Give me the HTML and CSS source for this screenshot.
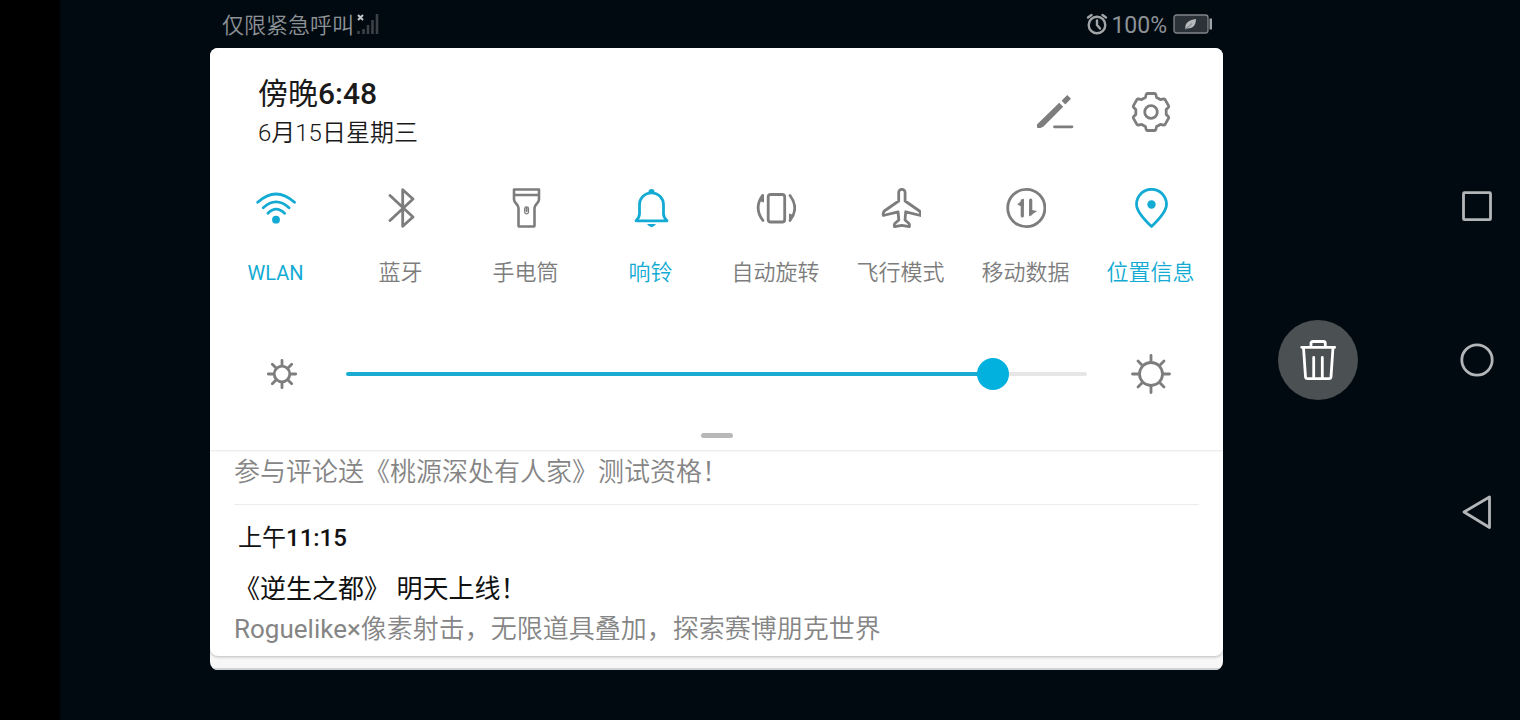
FILE: index.html
```html
<!DOCTYPE html>
<html lang="zh-CN">
<head>
<meta charset="utf-8">
<meta name="viewport" content="width=device-width, initial-scale=1">
<title>通知中心</title>
<link rel="stylesheet" href="styles.css">
</head>
<body>

<div class="cutout"></div>

<main class="shade">
  <header class="status">
    <span class="carrier">仅限紧急呼叫</span>
    <svg class="signal" width="24" height="24" viewBox="0 0 24 24">
      <path d="M2 3l5 5M7 3l-5 5" stroke="#c3c6c8" stroke-width="2"/>
      <path d="M2.500 22v-3M7.500 22v-5M12 22v-9M16.500 22V8M21 22V2" stroke="#3b4146" stroke-width="2.600"/>
    </svg>
    <svg class="alarm" width="22" height="24" viewBox="0 0 22 24" fill="none" stroke="#a2a5a7" stroke-width="2.400" stroke-linecap="round">
      <circle cx="11" cy="13" r="8.300"/>
      <path d="M11 8.500v4.500l3 3.500M2 5.500L5.500 3M20 5.500L16.500 3"/>
    </svg>
    <span class="percent">100%</span>
    <svg class="battery" width="40" height="20" viewBox="0 0 40 20">
      <rect x="1" y="1" width="34" height="18" rx="2.500" fill="#2c3338" stroke="#80858a" stroke-width="1.300"/>
      <path d="M36.500 4.500h2.500v11h-2.500z" fill="#a2a5a7"/>
      <path d="M12.500 15.500c-1-6 2.500-9.500 10.500-10.500 0 6-3 10-9 9.500l-1 1z" fill="#b5b9bb"/>
      <path d="M13 15l6-5.500" stroke="#555b60" stroke-width=".7"/>
    </svg>
  </header>

  <section class="panel">
    <div class="quick">
      <div class="top">
        <div class="clock">
          <h1>傍晚<span class="digits">6:48</span></h1>
          <p>6月15日星期三</p>
        </div>
        <button class="icon-btn" aria-label="编辑">
          <svg class="icon" viewBox="0 0 40 40">
            <path d="M24.200 10.800l4 4L8.500 34.500 5.500 36H3q-1 0-1-1v-2.500z" fill="currentColor" stroke="none"/>
            <path d="M30.300 8.700L32.300 6.700" stroke-width="5.200" stroke-linecap="square" stroke-linejoin="round"/>
            <path d="M19.500 34.800h17.500"/>
          </svg>
        </button>
        <button class="icon-btn" aria-label="设置">
          <svg class="icon" viewBox="0 0 40 40">
            <path d="M16.500 1.500h7q1 0 1.300 1l.8 3q2 1 3.800 2.200l3.200-.8q1 0 1.500.7l3.400 6q.5 1 0 1.600l-2.300 2.300v5l2.300 2.300q.5.600 0 1.600l-3.400 6q-.5.700-1.500.7l-3.200-.8q-1.800 1.200-3.800 2.200l-.8 3q-.3 1-1.300 1h-7q-1 0-1.300-1l-.8-3q-2-1-3.800-2.200l-3.200.8q-1 0-1.500-.7l-3.400-6q-.5-1 0-1.600l2.300-2.300v-5l-2.300-2.300q-.5-.6 0-1.600l3.400-6q.5-.7 1.500-.7l3.200.8q1.800-1.200 3.800-2.200l.8-3q.3-1 1.300-1z"/>
            <circle cx="20" cy="20" r="6.300"/>
          </svg>
        </button>
      </div>

      <div class="tiles">
        <button class="tile on">
          <svg class="icon" viewBox="0 0 40 40">
            <path d="M1.700 14.300Q20-2.300 38.500 14.300M7.300 19.700Q20 8 33 19.700M12 25.300Q20 17 28.500 25.300"/>
            <circle cx="20" cy="31.700" r="3.900" fill="currentColor" stroke="none"/>
          </svg>
          <span class="latin">WLAN</span>
        </button>
        <button class="tile">
          <svg class="icon" viewBox="0 0 40 40"><path d="M9 7.500L32 29 21.700 38.300V1.700L32 11 9 32.500"/></svg>
          <span>蓝牙</span>
        </button>
        <button class="tile">
          <svg class="icon" viewBox="0 0 40 40">
            <path d="M8 1.500h25v10c0 4-4.500 4.500-4.500 8.500v17.200q0 1.300-1.300 1.300h-13.400q-1.300 0-1.300-1.300V20c0-4-4.500-4.500-4.500-8.500zM8 7h25" stroke-width="2.600"/>
            <rect x="18.700" y="18.800" width="3.800" height="7" rx="1.800" stroke-width="1.300"/>
            <path d="M20.600 20v3" stroke-width="2"/>
          </svg>
          <span>手电筒</span>
        </button>
        <button class="tile on">
          <svg class="icon" viewBox="0 0 40 40">
            <path d="M5 32.800q3.500-3.500 3.500-7v-9a12 12 0 0 1 24 0v9q0 3.500 3.500 7z"/>
            <path d="M17.500 4a3 3 0 0 1 6 0zM16 36h9q-4.500 6.500-9 0z" fill="currentColor" stroke="none"/>
          </svg>
          <span>响铃</span>
        </button>
        <button class="tile">
          <svg class="icon" viewBox="0 0 40 40">
            <rect x="12.200" y="6.500" width="16.500" height="27.500" rx="2.500"/>
            <path d="M6.500 7.500q-9 12.500 .5 25M34 7.500q9.500 12.500 0 25"/>
            <path d="M8 6v8.500L3 13zM33 34v-8.500l5 1.500z" fill="currentColor" stroke="none"/>
          </svg>
          <span>自动旋转</span>
        </button>
        <button class="tile">
          <svg class="icon" viewBox="0 0 40 40">
            <path d="M17.700 4.500a3.200 3.200 0 0 1 6.400 0v8.500L38.500 23q1.500 1.500 1 4.500L24.700 23.800l-.7 8.200 4 3.500q.8 1.200.3 3.200L20.900 37.300 13.500 38.700q-.5-2 .3-3.200l4-3.500-.7-8.200L2.300 27.500q-.5-3 1-4.500L17.700 13z"/>
          </svg>
          <span>飞行模式</span>
        </button>
        <button class="tile">
          <svg class="icon" viewBox="0 0 40 40">
            <circle cx="20.300" cy="20" r="18.600"/>
            <path d="M16.300 12.500v15.500M24.700 12v14" stroke-width="3.200"/>
            <path d="M17.900 10.500v7.500h-3.600l-3-1.500zM23.100 28.500v-7l8 1.500z" fill="currentColor" stroke="none"/>
          </svg>
          <span>移动数据</span>
        </button>
        <button class="tile on">
          <svg class="icon" viewBox="0 0 40 40">
            <path d="M20.500 38.500Q5.500 24.500 5.500 16.300a15 15 0 0 1 30 0Q35.500 24.500 20.500 38.500z"/>
            <circle cx="20.500" cy="16.500" r="4.200" fill="currentColor" stroke="none"/>
          </svg>
          <span>位置信息</span>
        </button>
      </div>

      <div class="brightness">
        <svg class="icon" viewBox="0 0 40 40">
          <circle cx="20" cy="20" r="7.800"/>
          <path d="M20 6.300v5M20 28.700v5M6.300 20h5M28.700 20h5M10.300 10.300l3.500 3.500M26.200 26.200l3.500 3.500M29.700 10.300l-3.500 3.500M13.800 26.200l-3.500 3.500"/>
        </svg>
        <input type="range" class="slider" min="0" max="255" value="227" aria-label="亮度">
        <svg class="icon" viewBox="0 0 40 40">
          <circle cx="20" cy="20" r="11.500"/>
          <path d="M20 1.500v6M20 32.500v6M1.500 20h6M32.500 20h6M7 7l4.200 4.200M28.800 28.800L33 33M33 7l-4.200 4.200M11.200 28.800L7 33"/>
        </svg>
      </div>
      <div class="handle"></div>
    </div>

    <div class="notices">
      <article class="notice">
        <p>参与评论送《桃源深处有人家》测试资格！</p>
      </article>
      <article class="notice">
        <time>上午<span class="digits">11:15</span></time>
        <h2>《逆生之都》 明天上线！</h2>
        <p><span class="latin">Roguelike×</span>像素射击，无限道具叠加，探索赛博朋克世界</p>
      </article>
    </div>
    <div class="next-card"></div>
  </section>
</main>

<button class="clear" aria-label="全部清除">
  <svg class="icon" viewBox="0 0 40 40">
    <path d="M3.700 7.300h33M13 7V3.500q0-2 2-2h10.300q2 0 2 2V7M5.500 7.500l2 29.300q.2 1.800 2 1.800h21.500q1.800 0 2-1.800L35 7.500M15.700 17.500v21M24.300 17.500v21"/>
  </svg>
</button>

<nav class="nav">
  <button aria-label="最近任务"><svg class="icon" viewBox="0 0 40 40"><rect x="6.500" y="5.700" width="27" height="27" rx="1"/></svg></button>
  <button aria-label="主屏幕"><svg class="icon" viewBox="0 0 40 40"><circle cx="20" cy="20" r="15.200"/></svg></button>
  <button aria-label="返回"><svg class="icon" viewBox="0 0 40 40"><path d="M7 19L32.500 4v30.500z"/></svg></button>
</nav>

</body>
</html>
```

FILE: styles.css
```css
* {
  box-sizing: border-box;
}

body {
  display: flex;
  min-height: 100vh;
  margin: 0;
  background: #020a11;
  font-family: Roboto, "Noto Sans CJK SC", sans-serif;
  font-weight: 350;
}

h1, h2, p {
  margin: 0;
}

button {
  padding: 0;
  border: 0;
  background: none;
  color: inherit;
  font: inherit;
  cursor: pointer;
}

.icon {
  display: block;
  flex: none;
  width: 40px;
  height: 40px;
  fill: none;
  stroke: currentColor;
  stroke-width: 2.8;
  stroke-linecap: round;
  stroke-linejoin: round;
}

.digits {
  font-weight: 500;
}

.latin {
  font-weight: 400;
}

.cutout {
  width: 60px;
  background: #000;
}

.shade {
  flex: 1;
  margin-left: 150px;
}

/* status bar */
.status {
  display: flex;
  align-items: center;
  height: 48px;
  padding: 0 10px 0 12px;
  color: #8d9296;
  font-size: 22px;
}

.carrier {
  padding-bottom: 2px;
}

.signal {
  margin-left: 2px;
}

.alarm {
  margin-left: auto;
}

.percent {
  margin: 2px 6px 0 3px;
  font-size: 23px;
  font-weight: 400;
}

/* panel */
.panel {
  overflow: hidden;
  border-radius: 8px;
  background: #f7f7f7;
  color: #7d7d7d;
}

.quick {
  position: relative;
  z-index: 1;
  padding-bottom: 12px;
  background: #fff;
  box-shadow: 0 0 3px rgba(0, 0, 0, 0.18);
}

.top {
  display: flex;
  align-items: center;
  gap: 56px;
  padding: 28px 52px 0 48px;
}

.clock {
  flex: 1;
  color: #1a1a1a;
}

.clock h1 {
  font-size: 30px;
  font-weight: 400;
  line-height: 36px;
}

.clock p {
  margin-top: 7px;
  font-size: 24px;
  line-height: 28px;
}

.tiles {
  display: grid;
  grid-template-columns: repeat(8, 1fr);
  margin-top: 41px;
  padding: 0 10px 0 3px;
}

.tile {
  display: flex;
  flex-direction: column;
  align-items: center;
  gap: 30px;
  font-size: 22px;
  line-height: 30px;
  white-space: nowrap;
}

.tile.on {
  color: #13abd3;
}

.tile .latin {
  font-size: 20px;
}

.brightness {
  display: flex;
  align-items: center;
  gap: 44px;
  margin-top: 66px;
  padding: 0 52px;
}

.slider {
  flex: 1;
  min-width: 0;
  height: 32px;
  margin: 0;
  background: none;
  -webkit-appearance: none;
  appearance: none;
}

.slider::-webkit-slider-runnable-track {
  height: 4px;
  border-radius: 2px;
  background: linear-gradient(to right, #1aabd2 88%, #e6e6e6 88%);
}

.slider::-webkit-slider-thumb {
  width: 32px;
  height: 32px;
  margin-top: -14px;
  border-radius: 50%;
  background: #03b1de;
  -webkit-appearance: none;
}

.handle {
  width: 32px;
  height: 5px;
  margin: 39px auto 0;
  border-radius: 3px;
  background: #b8b8b8;
}

/* notifications */
.notices {
  position: relative;
  padding: 0 24px;
  border-radius: 0 0 8px 8px;
  background: #fff;
  box-shadow: 0 1px 3px rgba(0, 0, 0, 0.25);
}

.notice {
  padding: 16px 0 10px;
}

.notice:first-child {
  padding: 5px 0 15px;
  border-bottom: 1px solid #ececec;
}

.notice p {
  color: #858585;
  font-size: 26px;
  line-height: 34px;
}

.notice time {
  display: block;
  padding-left: 4px;
  color: #111;
  font-size: 24px;
  font-weight: 400;
  line-height: 34px;
}

.notice h2 {
  margin: 17px 0 6px;
  color: #111;
  font-size: 26px;
  font-weight: 400;
  line-height: 34px;
}

.next-card {
  height: 14px;
  border-bottom: 2px solid #cfd3d5;
}

/* clear all */
.clear {
  display: flex;
  align-items: center;
  justify-content: center;
  align-self: center;
  width: 80px;
  height: 80px;
  margin: 0 76px 0 55px;
  border-radius: 50%;
  background: #4b5053;
  color: #fff;
}

/* navigation keys */
.nav {
  display: flex;
  flex-direction: column;
  align-items: center;
  justify-content: center;
  gap: 113px;
  width: 86px;
  color: #b3b6b8;
}
```
